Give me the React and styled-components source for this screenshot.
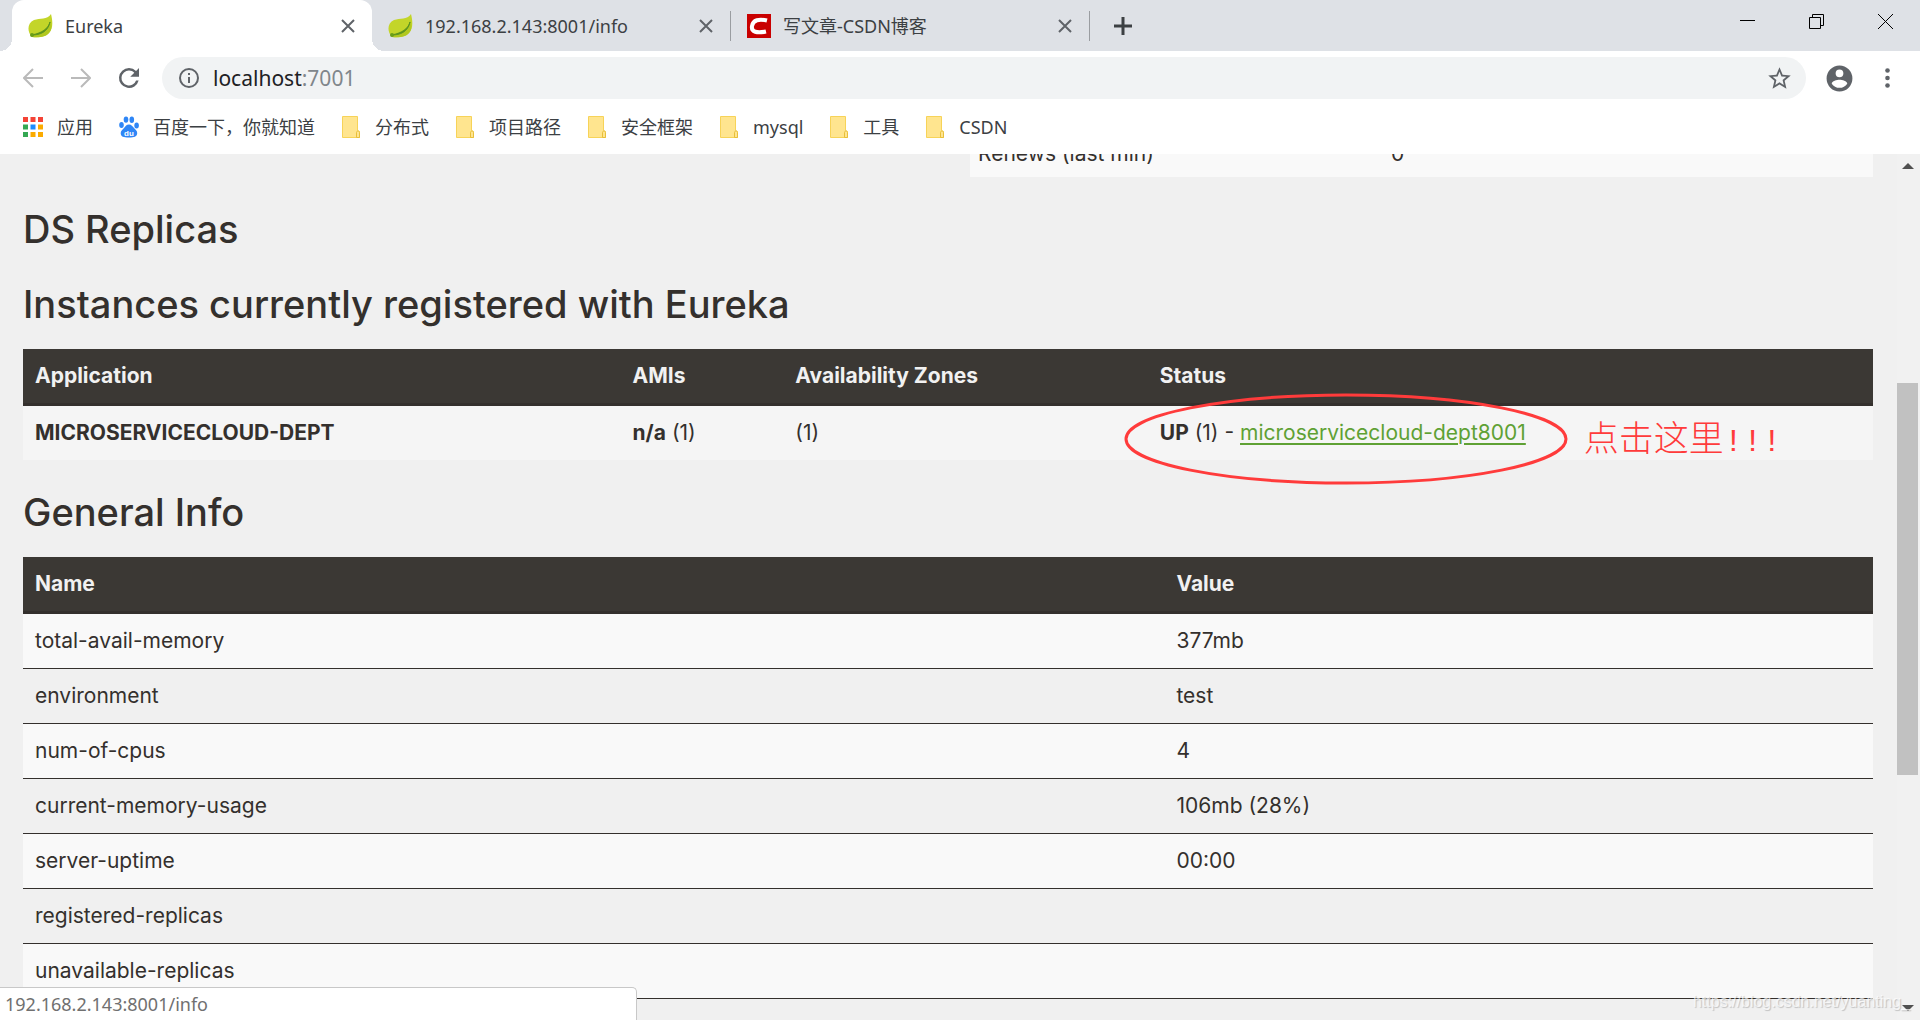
import React from 'react';
import styled, { createGlobalStyle } from 'styled-components';

const GlobalStyle = createGlobalStyle`
  * {
    box-sizing: border-box;
  }

  body {
    margin: 0;
    background: #f0f0f0;
    color: #34302d;
    font-family: Inter, 'Noto Sans CJK SC', sans-serif;
  }

  button {
    padding: 0;
    border: 0;
    background: none;
    font: inherit;
    color: inherit;
  }
`;

const Browser = styled.div`
  position: relative;
  display: flex;
  flex-direction: column;
  height: 100vh;
  overflow: hidden;
`;

const Chrome = styled.header`
  flex: none;
  background: #fff;
  color: #3c4043;
  font-family: 'Noto Sans', 'Noto Sans CJK SC', sans-serif;
  font-size: 18px;
`;

const TabStrip = styled.div`
  display: flex;
  height: 51px;
  padding-left: 12px;
  background: #dee1e6;
`;

const Tab = styled.div`
  position: relative;
  display: flex;
  align-items: center;
  gap: 12px;
  width: ${({ $active }) => ($active ? 360 : 358)}px;
  padding: 0 16px;
  border-radius: 12px 12px 0 0;
  background: ${({ $active }) => ($active ? '#fff' : 'transparent')};

  &::before,
  &::after {
    content: '';
    display: ${({ $active }) => ($active ? 'block' : 'none')};
    position: absolute;
    bottom: 0;
    width: 12px;
    height: 12px;
  }

  &::before {
    left: -12px;
    background: radial-gradient(circle at 0 0, #dee1e6 12px, #fff 12px);
  }

  &::after {
    right: -12px;
    background: radial-gradient(circle at 100% 0, #dee1e6 12px, #fff 12px);
  }
`;

const TabTitle = styled.span`
  flex: 1;
  line-height: 24px;
  white-space: nowrap;
`;

const TabDivider = styled.span`
  align-self: center;
  width: 1px;
  height: 30px;
  background: #9a9da1;
`;

const IconButton = styled.button`
  display: flex;
  flex: none;
  align-items: center;
  justify-content: center;
  width: ${({ $width }) => $width || 24}px;
  height: ${({ $height }) => $height || 24}px;
  color: ${({ $color }) => $color || '#5f6368'};

  svg {
    flex: none;
  }
`;

const WindowControls = styled.div`
  display: flex;
  margin-left: auto;
`;

const Toolbar = styled.div`
  display: flex;
  align-items: center;
  height: 54px;
  padding: 0 15px 0 9px;
`;

const AddressBar = styled.label`
  display: flex;
  flex: 1;
  align-items: center;
  gap: 12px;
  height: 42px;
  margin: 0 3px 0 9px;
  padding: 0 15px;
  border-radius: 21px;
  background: #f1f3f4;
`;

const Address = styled.div`
  display: grid;
  flex: 1;
  font-size: 21px;
  line-height: 30px;
`;

const AddressInput = styled.input`
  grid-area: 1 / 1;
  width: 100%;
  padding: 0;
  border: 0;
  outline: 0;
  background: none;
  font: inherit;
  color: transparent;
`;

const AddressText = styled.span`
  grid-area: 1 / 1;
  color: #80868b;
  pointer-events: none;

  b {
    font-weight: 400;
    color: #202124;
  }
`;

const Bookmarks = styled.nav`
  display: flex;
  align-items: center;
  gap: 26px;
  height: 49px;
  padding: 0 23px 6px;
`;

const Bookmark = styled.a`
  display: flex;
  align-items: center;
  gap: 14px;
  line-height: 24px;
  color: inherit;
  text-decoration: none;
`;

const Viewport = styled.div`
  display: flex;
  flex: 1;
  min-height: 0;
`;

const Page = styled.main`
  flex: 1;
  min-width: 0;
  overflow: hidden;
  padding: 0 24px 0 23px;
  font-size: 21px;
  line-height: 30px;
`;

const Heading = styled.h1`
  margin: 29px 0 22px;
  font-size: 38px;
  font-weight: 500;
  line-height: 46px;
`;

const Table = styled.table`
  width: 100%;
  border-collapse: separate;
  border-spacing: 0;
  table-layout: fixed;

  th,
  td {
    padding: 12px;
    text-align: left;
    font-weight: 400;
  }

  thead th {
    border-bottom: 3px solid #34302d;
    background: #3b3834;
    font-weight: 700;
    color: #f1f1f1;
  }
`;

// the page is scrolled, so this one starts above the viewport
const StatusTable = styled(Table)`
  width: 903px;
  margin: -22px 0 0 auto;
  background: #f9f9f9;

  th,
  td {
    padding: 7px 8px 8px;
  }
`;

const InstancesTable = styled(Table)`
  tbody {
    background: #f5f5f5;
  }
`;

const InfoTable = styled(Table)`
  tbody th,
  tbody td {
    height: 55px;
    border-bottom: 1px solid #34302d;
  }

  tbody tr:nth-child(odd) {
    background: #f9f9f9;
  }
`;

const Col = styled.col`
  width: ${({ $width }) => $width};
`;

const InstanceLink = styled.a`
  color: #5fa134;
  text-underline-offset: 3px;
`;

const StatusCell = styled.td`
  position: relative;
`;

const Callout = styled.svg`
  position: absolute;
  left: -24px;
  top: -13px;
  width: 444px;
  height: 92px;
  pointer-events: none;
`;

const CalloutText = styled.span`
  position: absolute;
  left: 436px;
  top: 12px;
  font-family: 'Noto Sans CJK SC', sans-serif;
  font-size: 35px;
  font-weight: 300;
  line-height: 36px;
  white-space: nowrap;
  color: #ff3b3b;
`;

const Marks = styled.span`
  font-family: 'Liberation Mono', monospace;
  font-size: 32px;
`;

const ScrollBar = styled.div`
  display: flex;
  flex-direction: column;
  width: 23px;
  background: #f1f1f1;
`;

const ScrollTrack = styled.div`
  display: grid;
  flex: 1;
  grid-template-rows: 25% 48% 1fr;
  width: 21px;
`;

const ScrollThumb = styled.div`
  grid-row: 2;
  background: #c1c1c1;
`;

const LinkStatus = styled.div`
  position: absolute;
  left: 0;
  bottom: 0;
  width: 637px;
  height: 33px;
  padding: 0 5px;
  border: solid #c8c8c8;
  border-width: 1px 1px 0 0;
  border-radius: 0 5px 0 0;
  background: #fff;
  font-family: 'Noto Sans', sans-serif;
  font-size: 18px;
  line-height: 32px;
  color: #707070;
`;

const Watermark = styled.div`
  position: absolute;
  right: 10px;
  bottom: 6px;
  font-family: 'Liberation Sans', sans-serif;
  font-size: 16px;
  line-height: 24px;
  color: rgba(255, 255, 255, 0.7);
  text-shadow: 1px 1px 1px rgba(0, 0, 0, 0.2);
`;

function Leaf() {
  return (
    <svg width="25" height="24" viewBox="0 0 25 24">
      <path d="M23 0c2 8 2 15-2 19-4 4-11 5-17 4C-1 18-1 9 6 6c6-2 13 0 17-6z" fill="#c3d529" />
      <path d="M22 6c0 6-5 11-17 14l-2 1 1 2c7 1 14 0 17-4 3-3 3-8 1-13z" fill="#b1c81f" />
      <path d="M22 8c-2 7-8 11-18 13 8 0 16-3 18-13z" fill="#5c9420" stroke="#5c9420" />
      <circle cx="4" cy="21" r="2" fill="#6a9e18" />
    </svg>
  );
}

function CsdnLogo() {
  return (
    <svg width="24" height="24" viewBox="0 0 24 24">
      <path d="M0 0h24v24H0z" fill="#c90000" />
      <path d="M20 6.500C12 4.500 6 6 5 12c-1 6 5 7.500 14 5.500" fill="none" stroke="#fff" strokeWidth="4" />
    </svg>
  );
}

function Cross() {
  return (
    <svg width="14" height="14" viewBox="0 0 14 14">
      <path d="M1 1l12 12M13 1L1 13" stroke="currentColor" strokeWidth="2" />
    </svg>
  );
}

function Arrow({ forward }) {
  return (
    <svg width="20" height="20" viewBox="0 0 20 20">
      <path
        d={forward ? 'M0 10h18M10 1l9 9-9 9' : 'M20 10H2M10 1l-9 9 9 9'}
        fill="none"
        stroke="currentColor"
        strokeWidth="2"
      />
    </svg>
  );
}

function Reload() {
  return (
    <svg width="30" height="30" viewBox="0 0 24 24" fill="currentColor">
      <path d="M17.65 6.35A7.96 7.96 0 0 0 12 4a8 8 0 1 0 7.73 10h-2.08A6 6 0 1 1 12 6c1.66 0 3.14.69 4.22 1.78L13 11h7V4z" />
    </svg>
  );
}

function AppsGrid() {
  const colors = ['#f44336', '#f44336', '#f44336', '#34a853', '#1a8cff', '#fbab00', '#34a853', '#fbab00', '#fbab00'];
  return (
    <svg width="20" height="20" viewBox="0 0 20 20">
      {colors.map((fill, i) => (
        <rect key={i} x={(i % 3) * 7.5} y={Math.floor(i / 3) * 7.5} width="5" height="5" fill={fill} />
      ))}
    </svg>
  );
}

const PawText = styled.text`
  font: 700 8px 'Liberation Sans', sans-serif;
`;

function BaiduPaw() {
  return (
    <svg width="20" height="22" viewBox="0 0 20 22" fill="#2f86f6">
      <ellipse cx="2.500" cy="9" rx="2.300" ry="3" />
      <ellipse cx="7" cy="3.600" rx="2.300" ry="3.200" />
      <ellipse cx="12.800" cy="3.800" rx="2.300" ry="3.200" />
      <ellipse cx="17.600" cy="9.500" rx="2.300" ry="3" />
      <path d="M10 8.500c2.500 0 3.500 2 5 3.500s3.500 3 3.200 5.500c-.4 3-2.700 4-8.200 4s-8-.8-8.300-4c-.2-2.500 1.800-3.800 3.300-5.500s2.500-3.500 5-3.500z" />
      <PawText x="5" y="20" fill="#fff">du</PawText>
    </svg>
  );
}

function Folder() {
  return (
    <svg width="20" height="22" viewBox="0 0 20 22">
      <path d="M1.500.5h15v14l2 1v6h-17z" fill="#ffe58f" stroke="#f7d358" />
      <path d="M15.500 21.500v-5c0-2 3-2 3 0v5z" fill="#ffe58f" stroke="#e8bf3a" />
    </svg>
  );
}

const tabs = [
  { title: 'Eureka', icon: <Leaf />, active: true },
  { title: '192.168.2.143:8001/info', icon: <Leaf />, divider: true },
  { title: '写文章-CSDN博客', icon: <CsdnLogo />, divider: true },
];

const bookmarks = [
  { name: '应用', icon: <AppsGrid /> },
  { name: '百度一下，你就知道', icon: <BaiduPaw /> },
  { name: '分布式', icon: <Folder /> },
  { name: '项目路径', icon: <Folder /> },
  { name: '安全框架', icon: <Folder /> },
  { name: 'mysql', icon: <Folder /> },
  { name: '工具', icon: <Folder /> },
  { name: 'CSDN', icon: <Folder /> },
];

const generalInfo = [
  ['total-avail-memory', '377mb'],
  ['environment', 'test'],
  ['num-of-cpus', '4'],
  ['current-memory-usage', '106mb (28%)'],
  ['server-uptime', '00:00'],
  ['registered-replicas', ''],
  ['unavailable-replicas', ''],
];

function BrowserChrome() {
  return (
    <Chrome>
      <TabStrip>
        {tabs.map(({ title, icon, active, divider }) => (
          <React.Fragment key={title}>
            <Tab $active={active}>
              {icon}
              <TabTitle>{title}</TabTitle>
              <IconButton $width={16} aria-label="Close tab"><Cross /></IconButton>
            </Tab>
            {divider && <TabDivider />}
          </React.Fragment>
        ))}
        <IconButton $width={66} $height={51} $color="#3c4043" aria-label="New tab">
          <svg width="18" height="18" viewBox="0 0 18 18">
            <path d="M9 0v18M0 9h18" stroke="currentColor" strokeWidth="3" />
          </svg>
        </IconButton>
        <WindowControls>
          <IconButton $width={69} $height={42} $color="#000" aria-label="Minimize">
            <svg width="15" height="15" viewBox="0 0 15 15">
              <path d="M0 6.500h15" stroke="currentColor" />
            </svg>
          </IconButton>
          <IconButton $width={69} $height={42} $color="#000" aria-label="Restore">
            <svg width="15" height="15" viewBox="0 0 15 15">
              <path d="M.5 3.500h11v11H.5zM3.500 3V.5h11v11H12" fill="none" stroke="currentColor" />
            </svg>
          </IconButton>
          <IconButton $width={69} $height={42} $color="#000" aria-label="Close">
            <svg width="15" height="15" viewBox="0 0 15 15">
              <path d="M0 0l15 15M15 0L0 15" stroke="currentColor" />
            </svg>
          </IconButton>
        </WindowControls>
      </TabStrip>

      <Toolbar>
        <IconButton $width={48} $color="#bababa" aria-label="Back"><Arrow /></IconButton>
        <IconButton $width={48} $color="#bababa" aria-label="Forward"><Arrow forward /></IconButton>
        <IconButton $width={48} aria-label="Reload"><Reload /></IconButton>
        <AddressBar>
          <svg width="24" height="24" viewBox="0 0 24 24">
            <circle cx="12" cy="12" r="9" fill="none" stroke="#5f6368" strokeWidth="2" />
            <path d="M12 11v6M12 7v2" stroke="#5f6368" strokeWidth="2" />
          </svg>
          <Address>
            <AddressInput aria-label="Address" />
            <AddressText><b>localhost</b>:7001</AddressText>
          </Address>
          <IconButton aria-label="Bookmark this page">
            <svg width="27" height="27" viewBox="0 0 24 24" fill="currentColor">
              <path d="M22 9.240l-7.190-.62L12 2 9.190 8.630 2 9.240l5.460 4.730L5.820 21 12 17.270 18.180 21l-1.630-7.030zM12 15.400l-3.760 2.270 1-4.280-3.320-2.880 4.380-.38L12 6.100l1.710 4.040 4.380.38-3.320 2.880 1 4.280z" />
            </svg>
          </IconButton>
        </AddressBar>
        <IconButton $width={60} $height={42} aria-label="Profile">
          <svg width="31" height="31" viewBox="0 0 24 24" fill="currentColor">
            <path d="M12 2a10 10 0 1 0 0 20 10 10 0 0 0 0-20zm0 3a3 3 0 1 1 0 6 3 3 0 0 1 0-6zm0 14.200a7.200 7.200 0 0 1-6-3.220c.03-1.990 4-3.080 6-3.080s5.970 1.090 6 3.080a7.200 7.200 0 0 1-6 3.220z" />
          </svg>
        </IconButton>
        <IconButton $width={36} $height={42} aria-label="Menu">
          <svg width="5" height="20" viewBox="0 0 5 20" fill="currentColor">
            <circle cx="2.500" cy="2.500" r="2.300" />
            <circle cx="2.500" cy="10" r="2.300" />
            <circle cx="2.500" cy="17.500" r="2.300" />
          </svg>
        </IconButton>
      </Toolbar>

      <Bookmarks>
        {bookmarks.map(({ name, icon }) => (
          <Bookmark key={name} href="#">
            {icon}
            {name}
          </Bookmark>
        ))}
      </Bookmarks>
    </Chrome>
  );
}

function EurekaPage() {
  return (
    <Page>
      <StatusTable>
        <colgroup>
          <Col $width="413px" />
          <Col />
        </colgroup>
        <tbody>
          <tr>
            <th scope="row">Renews (last min)</th>
            <td>0</td>
          </tr>
        </tbody>
      </StatusTable>

      <Heading>DS Replicas</Heading>

      <Heading>Instances currently registered with Eureka</Heading>
      <InstancesTable>
        <colgroup>
          <Col $width="32.3%" />
          <Col $width="8.8%" />
          <Col $width="19.7%" />
          <Col />
        </colgroup>
        <thead>
          <tr>
            <th>Application</th>
            <th>AMIs</th>
            <th>Availability Zones</th>
            <th>Status</th>
          </tr>
        </thead>
        <tbody>
          <tr>
            <td><b>MICROSERVICECLOUD-DEPT</b></td>
            <td><b>n/a</b> (1)</td>
            <td>(1)</td>
            <StatusCell>
              <b>UP</b> (1) - <InstanceLink href="#">microservicecloud-dept8001</InstanceLink>
              <Callout viewBox="0 0 444 92">
                <ellipse cx="222" cy="46" rx="220" ry="44" fill="none" stroke="#ff3b3b" strokeWidth="3" />
              </Callout>
              <CalloutText>点击这里<Marks>!!!</Marks></CalloutText>
            </StatusCell>
          </tr>
        </tbody>
      </InstancesTable>

      <Heading>General Info</Heading>
      <InfoTable>
        <colgroup>
          <Col $width="61.7%" />
          <Col />
        </colgroup>
        <thead>
          <tr>
            <th>Name</th>
            <th>Value</th>
          </tr>
        </thead>
        <tbody>
          {generalInfo.map(([name, value]) => (
            <tr key={name}>
              <th scope="row">{name}</th>
              <td>{value}</td>
            </tr>
          ))}
        </tbody>
      </InfoTable>
    </Page>
  );
}

export default function App() {
  return (
    <Browser>
      <GlobalStyle />
      <BrowserChrome />
      <Viewport>
        <EurekaPage />
        <ScrollBar>
          <IconButton $width={21} aria-label="Scroll up" $color="#505050">
            <svg width="12" height="6" viewBox="0 0 12 6" fill="currentColor"><path d="M6 0l6 6H0z" /></svg>
          </IconButton>
          <ScrollTrack><ScrollThumb /></ScrollTrack>
          <IconButton $width={21} aria-label="Scroll down" $color="#505050">
            <svg width="12" height="6" viewBox="0 0 12 6" fill="currentColor"><path d="M0 0h12L6 6z" /></svg>
          </IconButton>
        </ScrollBar>
      </Viewport>
      <LinkStatus>192.168.2.143:8001/info</LinkStatus>
      <Watermark>https://blog.csdn.net/yuanting_</Watermark>
    </Browser>
  );
}
